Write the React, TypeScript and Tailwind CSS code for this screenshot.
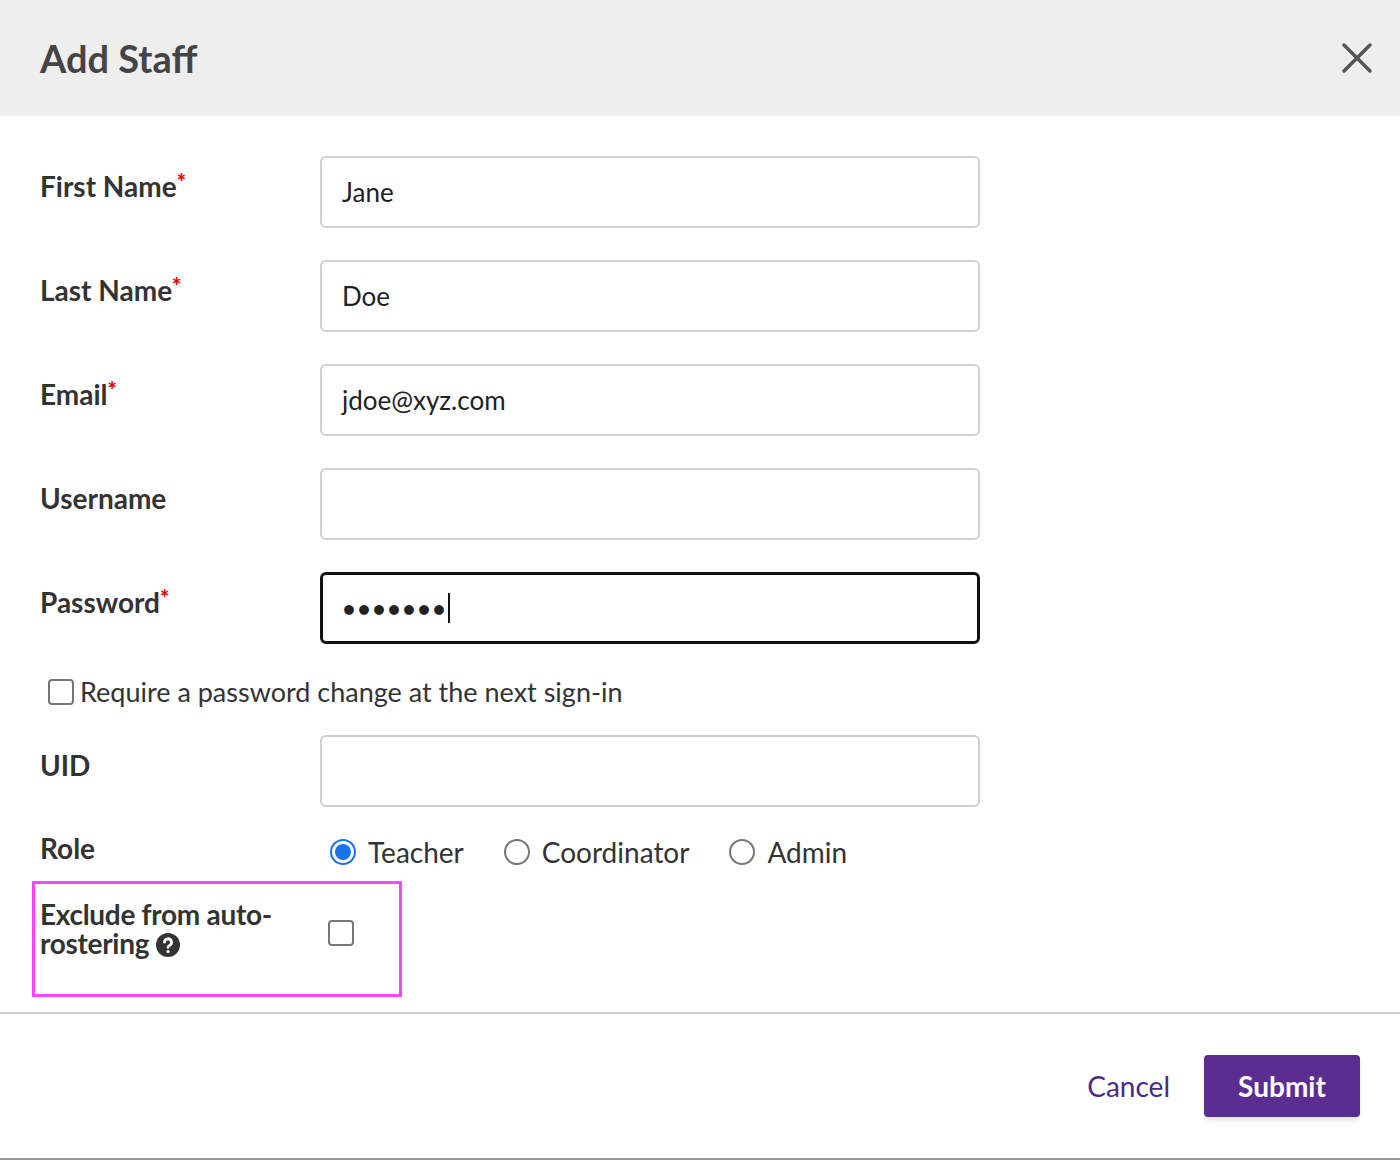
const font = { fontFamily: "Lato, 'Noto Sans', sans-serif" };

function Row({ label, required, children, top = "mt-8" }: { label: string; required?: boolean; children: React.ReactNode; top?: string }) {
  return (
    <div className={`flex items-center ${top}`}>
      <div className="w-[280px] text-[28px] font-bold text-[#333] pb-3">
        {label}
        {required && <span className="text-[#e00] align-top text-[22px] font-black">*</span>}
      </div>
      {children}
    </div>
  );
}

function Field({ value, focused }: { value?: string; focused?: boolean }) {
  return (
    <div
      className={`w-[660px] h-[72px] rounded-[6px] flex items-center px-5 text-[26px] text-[#222] ${
        focused ? "border-[3px] border-[#111]" : "border-2 border-[#cfcfcf]"
      }`}
    >
      {focused ? (
        <span className="text-[20px] tracking-[3px]">{value}</span>
      ) : (
        value
      )}
      {focused && <span className="inline-block w-[2px] h-[30px] bg-[#111]" />}
    </div>
  );
}

function Radio({ label, checked }: { label: string; checked?: boolean }) {
  return (
    <div className="flex items-center gap-3 mr-10">
      <span
        className={`w-[26px] h-[26px] rounded-full flex items-center justify-center border-2 ${
          checked ? "border-[#1a73e8]" : "border-[#777]"
        }`}
      >
        {checked && <span className="w-[16px] h-[16px] rounded-full bg-[#1a73e8]" />}
      </span>
      <span className="text-[28px] text-[#333]">{label}</span>
    </div>
  );
}

export default function App() {
  return (
    <div style={font} className="w-[1400px] h-[1160px] bg-white border-b-2 border-[#999] flex flex-col">
      <div className="h-[116px] shrink-0 bg-[#eeeeee] flex items-center justify-between pl-10 pr-[26px]">
        <h1 className="text-[38px] font-bold text-[#444]">Add Staff</h1>
        <svg width="34" height="34" viewBox="0 0 34 34" stroke="#555" strokeWidth="3.5" strokeLinecap="round">
          <path d="M4 4L30 30M30 4L4 30" />
        </svg>
      </div>
      <div className="px-10 pt-10 flex-1">
        <Row label="First Name" required top="">
          <Field value="Jane" />
        </Row>
        <Row label="Last Name" required>
          <Field value="Doe" />
        </Row>
        <Row label="Email" required>
          <Field value="jdoe@xyz.com" />
        </Row>
        <Row label="Username">
          <Field />
        </Row>
        <Row label="Password" required>
          <Field value="●●●●●●●" focused />
        </Row>
        <div className="flex items-center gap-[6px] mt-[28px] ml-2">
          <span className="w-[26px] h-[26px] border-2 border-[#777] rounded-[4px]" />
          <span className="text-[27px] text-[#333]">Require a password change at the next sign-in</span>
        </div>
        <Row label="UID" top="mt-[22px]">
          <Field />
        </Row>
        <div className="flex items-center mt-[20px]">
          <div className="w-[290px] text-[28px] font-bold text-[#333] pb-2">Role</div>
          <Radio label="Teacher" checked />
          <Radio label="Coordinator" />
          <Radio label="Admin" />
        </div>
        <div className="-ml-2 mt-[4px] w-[370px] h-[116px] border-[3px] border-[#ff44ff] flex pl-[5px] pt-[16px]">
          <div className="w-[288px] text-[28px] font-bold text-[#333] leading-[29px] tracking-[-0.3px]">
            Exclude from auto-
            <br />
            rostering{" "}
            <svg className="inline-block align-[-3px]" width="24" height="24" viewBox="0 0 24 24">
              <circle cx="12" cy="12" r="12" fill="#333" />
              <path d="M8.5 9.2a3.5 3.5 0 1 1 5 3.2c-1 .5-1.5 1-1.5 2" stroke="#fff" strokeWidth="2.8" fill="none" strokeLinecap="round" />
              <circle cx="12" cy="18.5" r="1.6" fill="#fff" />
            </svg>
          </div>
          <span className="mt-[20px] w-[26px] h-[26px] border-2 border-[#777] rounded-[4px]" />
        </div>
      </div>
      <div className="h-[146px] shrink-0 border-t-2 border-[#ccc] flex items-center justify-end pr-10 gap-[34px]">
        <span className="text-[28px] text-[#4b2a8a]">Cancel</span>
        <button className="w-[156px] h-[62px] rounded-[4px] bg-[#5b2d90] text-white text-[28px] font-bold shadow-md">
          Submit
        </button>
      </div>
    </div>
  );
}
